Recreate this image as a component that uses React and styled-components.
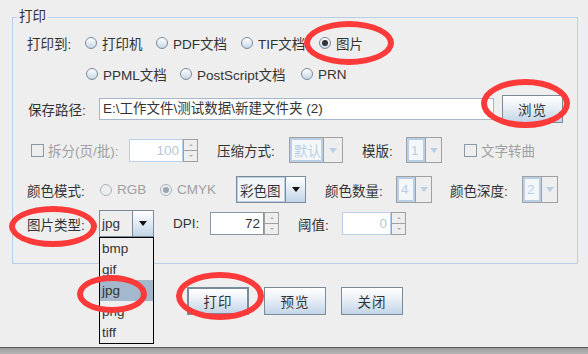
import React from 'react';
import styled, { createGlobalStyle, css } from 'styled-components';

const GlobalStyle = createGlobalStyle`
  html, body {
    margin: 0;
    padding: 0;
    background: #eeeeee;
  }
  body {
    font-family: "Liberation Sans", "Noto Sans CJK SC", sans-serif;
    font-size: 13.5px;
    color: #333333;
  }
`;

const Page = styled.div`
  position: relative;
  width: 588px;
  height: 354px;
  overflow: hidden;
  display: flex;
  flex-direction: column;
  background: #eeeeee;
`;

const Panel = styled.div`
  position: relative;
  box-sizing: border-box;
  width: 566px;
  margin: 17px 0 0 12px;
  padding: 12px 0 26px 0;
  border: 1px solid #b8cfe5;
`;

const PanelTitle = styled.span`
  position: absolute;
  top: -9px;
  left: 4px;
  padding: 0 2px;
  background: #eeeeee;
  line-height: 16px;
`;

const Row = styled.div`
  display: flex;
  align-items: center;
  height: ${p => p.$h || 26}px;
  margin-top: ${p => p.$mt || 0}px;
  padding-left: ${p => p.$pl || 0}px;
`;

const Label = styled.span`
  flex: none;
  width: ${p => p.$w}px;
  margin-left: ${p => p.$ml || 0}px;
  white-space: nowrap;
  color: ${p => (p.$disabled ? '#a0a0a0' : '#333333')};
`;

const Option = styled.label`
  flex: none;
  display: flex;
  align-items: center;
  gap: ${p => p.$gap || 5}px;
  width: ${p => p.$w}px;
  margin-left: ${p => p.$ml || 0}px;
  white-space: nowrap;
  color: ${p => (p.$disabled ? '#a0a0a0' : '#333333')};
`;

const RadioDot = styled.span`
  position: relative;
  flex: none;
  box-sizing: border-box;
  width: 12px;
  height: 12px;
  border-radius: 50%;
  border: 1px solid ${p => (p.$disabled ? '#a8b4c0' : '#7a8a99')};
  background: ${p => (p.$disabled ? '#eeeeee' : 'linear-gradient(#ffffff, #c6d6e6)')};
  ${p => p.$checked && css`
    &::after {
      content: '';
      position: absolute;
      left: 2px;
      top: 2px;
      width: 6px;
      height: 6px;
      border-radius: 50%;
      background: ${p.$disabled ? '#9aa4ae' : '#333333'};
    }
  `}
`;

const CheckBox = styled.span`
  flex: none;
  box-sizing: border-box;
  width: 13px;
  height: 13px;
  border: 1px solid #8a98a8;
  background: #eeeeee;
`;

const TextField = styled.div`
  flex: none;
  box-sizing: border-box;
  width: ${p => p.$w}px;
  height: 22px;
  padding-left: 3px;
  border: 1px solid #a3b8cc;
  background: #ffffff;
  line-height: 20px;
  white-space: nowrap;
  overflow: hidden;
`;

const Button = styled.div`
  flex: none;
  box-sizing: border-box;
  display: flex;
  align-items: center;
  justify-content: center;
  width: ${p => p.$w || 62}px;
  height: 28px;
  margin-left: ${p => p.$ml || 0}px;
  border: ${p => (p.$primary ? 2 : 1)}px solid #7a8a99;
  background: linear-gradient(#ffffff 0%, #eef3f8 35%, #c2d5e8 100%);
  color: #333333;
  letter-spacing: 1px;
`;

const Combo = styled.div`
  position: relative;
  flex: none;
  box-sizing: border-box;
  display: flex;
  width: ${p => p.$w}px;
  height: ${p => p.$h || 27}px;
  border: 1px solid ${p => (p.$disabled ? '#a0a0a0' : '#7a8a99')};
`;

const ComboText = styled.div`
  flex: 1;
  box-sizing: border-box;
  padding-left: 2px;
  display: flex;
  align-items: center;
  white-space: nowrap;
  overflow: hidden;
  ${p => p.$disabled
    ? css`
      border: 2px solid #b8cfe5;
      color: #b8cfe5;
      background: #f4f7fa;
    `
    : css`
      border: ${p.$boxed ? '1px solid #b8cfe5' : 'none'};
      background: ${p.$boxed ? '#f2f5f8' : '#eeeeee'};
      color: #333333;
    `}
`;

const ComboArrow = styled.div`
  flex: none;
  display: flex;
  align-items: center;
  justify-content: center;
  width: ${p => p.$w || 18}px;
  border-left: 1px solid ${p => (p.$disabled ? '#a0a0a0' : '#7a8a99')};
  background: ${p => (p.$disabled ? '#eeeeee' : 'linear-gradient(#ffffff, #c2d5e8)')};
  &::after {
    content: '';
    border-left: 4px solid transparent;
    border-right: 4px solid transparent;
    border-top: 5px solid ${p => (p.$disabled ? '#b8cfe5' : '#111111')};
  }
`;

const PopupList = styled.div`
  position: absolute;
  top: calc(100% + 1px);
  left: -1px;
  z-index: 2;
  box-sizing: border-box;
  width: calc(100% + 2px);
  border: 1px solid #000000;
  background: #eeeeee;
`;

const PopupItem = styled.div`
  height: 21px;
  line-height: 21px;
  padding-left: 2px;
  color: #333333;
  background: ${p => (p.$selected ? '#a3b8cc' : 'transparent')};
`;

const Spinner = styled.div`
  flex: none;
  display: flex;
  width: ${p => p.$w}px;
  height: 23px;
`;

const SpinnerText = styled.div`
  flex: 1;
  box-sizing: border-box;
  padding-right: 3px;
  text-align: right;
  line-height: 21px;
  background: #ffffff;
  border: 1px solid ${p => (p.$disabled ? '#b8cfe5' : '#8797a8')};
  color: ${p => (p.$disabled ? '#b8c6d4' : '#333333')};
`;

const SpinnerButtons = styled.div`
  flex: none;
  display: flex;
  flex-direction: column;
  width: 15px;
`;

const SpinnerButton = styled.div`
  flex: 1;
  box-sizing: border-box;
  display: flex;
  align-items: center;
  justify-content: center;
  border: 1px solid #a0a0a0;
  border-top-width: ${p => (p.$down ? 0 : 1)}px;
  background: #eeeeee;
  &::after {
    content: '';
    border-left: 2px solid transparent;
    border-right: 2px solid transparent;
    ${p => (p.$down
      ? css`border-top: 2px solid #b0b0b0;`
      : css`border-bottom: 2px solid #b0b0b0;`)}
  }
`;

const ButtonBar = styled.div`
  display: flex;
  gap: 15px;
  margin-top: 23px;
  padding-left: 187px;
`;

const Spacer = styled.div`
  flex: 1;
`;

const WindowEdge = styled.div`
  height: 6px;
  border-top: 1px solid #5a5a5a;
  background: linear-gradient(#9c9c9c, #b4b4b4);
`;

const Mark = styled.div`
  position: absolute;
  box-sizing: border-box;
  left: ${p => p.$x}px;
  top: ${p => p.$y}px;
  width: ${p => p.$w}px;
  height: ${p => p.$h}px;
  border: 6px solid #fc3a3a;
  border-radius: 50%;
  pointer-events: none;
  z-index: 5;
`;

const Radio = ({ w, ml, checked, disabled, children }) => (
  <Option $w={w} $ml={ml} $disabled={disabled}>
    <RadioDot $checked={checked} $disabled={disabled} />
    {children}
  </Option>
);

const Check = ({ w, ml, children }) => (
  <Option $w={w} $ml={ml} $gap={4} $disabled>
    <CheckBox />
    {children}
  </Option>
);

const Select = ({ w, h, value, disabled, boxed, arrow, children }) => (
  <Combo $w={w} $h={h} $disabled={disabled}>
    <ComboText $disabled={disabled} $boxed={boxed}>{value}</ComboText>
    <ComboArrow $w={arrow} $disabled={disabled} />
    {children}
  </Combo>
);

const Spin = ({ w, value, disabled }) => (
  <Spinner $w={w}>
    <SpinnerText $disabled={disabled}>{value}</SpinnerText>
    <SpinnerButtons>
      <SpinnerButton />
      <SpinnerButton $down />
    </SpinnerButtons>
  </Spinner>
);

const imageTypes = ['bmp', 'gif', 'jpg', 'png', 'tiff'];

export default function App() {
  return (
    <Page>
      <GlobalStyle />
      <Panel>
        <PanelTitle>打印</PanelTitle>

        <Row $pl={14}>
          <Label $w={58}>打印到:</Label>
          <Radio w={71}>打印机</Radio>
          <Radio w={85}>PDF文档</Radio>
          <Radio w={78}>TIF文档</Radio>
          <Radio checked>图片</Radio>
        </Row>

        <Row $mt={5} $pl={73}>
          <Radio w={94}>PPML文档</Radio>
          <Radio w={121}>PostScript文档</Radio>
          <Radio>PRN</Radio>
        </Row>

        <Row $mt={8} $h={28} $pl={15}>
          <Label $w={71}>保存路径:</Label>
          <TextField $w={395}>E:\工作文件\测试数据\新建文件夹 (2)</TextField>
          <Button $w={61} $ml={8}>浏览</Button>
        </Row>

        <Row $mt={14} $pl={18}>
          <Check w={98}>拆分(页/批):</Check>
          <Spin w={69} value="100" disabled />
          <Label $ml={19} $w={72}>压缩方式:</Label>
          <Select w={54} h={26} value="默认" disabled />
          <Label $ml={19} $w={44}>模版:</Label>
          <Select w={36} h={26} value="1" disabled arrow={15} />
          <Check ml={22}>文字转曲</Check>
        </Row>

        <Row $mt={13} $h={27} $pl={14}>
          <Label $w={73}>颜色模式:</Label>
          <Radio w={60} disabled>RGB</Radio>
          <Radio w={76} disabled checked>CMYK</Radio>
          <Select w={70} value="彩色图" boxed arrow={19} />
          <Label $ml={19} $w={71}>颜色数量:</Label>
          <Select w={36} value="4" disabled arrow={15} />
          <Label $ml={18} $w={72}>颜色深度:</Label>
          <Select w={36} value="2" disabled arrow={15} />
        </Row>

        <Row $mt={7} $h={27} $pl={14}>
          <Label $w={72}>图片类型:</Label>
          <Select w={55} value="jpg" arrow={20}>
            <PopupList>
              {imageTypes.map(t => (
                <PopupItem key={t} $selected={t === 'jpg'}>{t}</PopupItem>
              ))}
            </PopupList>
          </Select>
          <Label $ml={19} $w={37}>DPI:</Label>
          <Spin w={69} value="72" />
          <Label $ml={19} $w={44}>阈值:</Label>
          <Spin w={64} value="0" disabled />
        </Row>
      </Panel>

      <ButtonBar>
        <Button $primary>打印</Button>
        <Button>预览</Button>
        <Button>关闭</Button>
      </ButtonBar>

      <Spacer />
      <WindowEdge />

      <Mark $x={304} $y={21} $w={90} $h={44} />
      <Mark $x={481} $y={79} $w={89} $h={49} />
      <Mark $x={9} $y={206} $w={88} $h={41} />
      <Mark $x={77} $y={275} $w={70} $h={38} />
      <Mark $x={176} $y={272} $w={88} $h={48} />
    </Page>
  );
}
